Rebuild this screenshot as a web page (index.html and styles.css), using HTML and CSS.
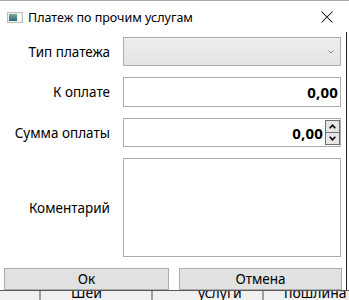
FILE: index.html
```html
<!DOCTYPE html>
<html>
<head>
<meta charset="utf-8">
<link rel="stylesheet" href="styles.css">
</head>
<body>
<div class="window">
  <div class="titlebar">
    <svg class="app-icon" width="16" height="11" viewBox="0 0 16 11">
      <defs>
        <linearGradient id="g1" x1="0" y1="0" x2="0" y2="1">
          <stop offset="0" stop-color="#86ab9f"/>
          <stop offset="1" stop-color="#2f6478"/>
        </linearGradient>
      </defs>
      <rect x="0" y="0" width="16" height="11" fill="#bdbdbd"/>
      <rect x="1" y="1" width="14" height="9" fill="#eeeeee"/>
      <rect x="2" y="2" width="8" height="7" fill="url(#g1)"/>
      <rect x="11" y="2" width="3" height="7" fill="#ffffff"/>
    </svg>
    <span class="title">Платеж по прочим услугам</span>
    <svg class="close" width="12" height="12" viewBox="0 0 12 12">
      <path d="M0.5 0.5 L11.5 11.5 M11.5 0.5 L0.5 11.5" stroke="#111" stroke-width="1.05" fill="none"/>
    </svg>
  </div>
  <div class="content">
    <div class="form">
      <label class="lbl">Тип платежа</label>
      <div class="combo">
        <svg class="chev" width="6" height="4" viewBox="0 0 6 4"><path d="M0.5 0.5 L3 3 L5.5 0.5" stroke="#8a8a8a" fill="none"/></svg>
      </div>
      <label class="lbl">К оплате</label>
      <div class="field"><span class="val">0,00</span></div>
      <label class="lbl">Сумма оплаты</label>
      <div class="field spin-field">
        <span class="val">0,00</span>
        <div class="spin">
          <div class="spin-btn"><svg width="7" height="5" viewBox="0 0 7 5"><path d="M0.7 4.2 L3.5 1.2 L6.3 4.2" stroke="#000" stroke-width="1.6" fill="none"/></svg></div>
          <div class="spin-btn"><svg width="7" height="5" viewBox="0 0 7 5"><path d="M0.7 0.8 L3.5 3.8 L6.3 0.8" stroke="#000" stroke-width="1.6" fill="none"/></svg></div>
        </div>
      </div>
      <label class="lbl">Коментарий</label>
      <div class="memo"></div>
    </div>
    <div class="buttons">
      <div class="btn">Ок</div>
      <div class="btn">Отмена</div>
    </div>
  </div>
</div>
<div class="behind">
  <div class="cell c1"></div>
  <div class="cell c2"><span>Шей</span></div>
  <div class="cell c3"><span>услуги</span></div>
  <div class="cell c4"><span>пошлина</span></div>
</div>
</body>
</html>
```
FILE: styles.css
```css
html, body {
  margin: 0;
  padding: 0;
  background: #ffffff;
  overflow: hidden;
}
body {
  width: 349px;
  height: 300px;
  font-family: "Noto Sans", "Open Sans", sans-serif;
  color: #000;
}
.window {
  width: 349px;
  height: 290px;
  background: #fff;
}
.titlebar {
  border-top: 1px solid #a9a9a9;
  display: flex;
  align-items: center;
  box-sizing: border-box;
  height: 32px;
}
.app-icon {
  margin-left: 7px;
  margin-top: 1px;
}
.title {
  margin-left: 5px;
  font-size: 12.5px;
  flex: 1;
  margin-top: 1px;
}
.close {
  margin-right: 16px;
}
.content {
  width: 346px;
  height: 258px;
  border-right: 1px solid #1e1e1e;
  box-sizing: content-box;
  padding-top: 5px;
}
.form {
  display: grid;
  grid-template-columns: 123px 218px;
  grid-template-rows: 29px 30px 29px 99px;
  row-gap: 11px;
}
.lbl {
  font-size: 13.5px;
  text-align: right;
  padding-right: 13px;
  display: flex;
  align-items: center;
  justify-content: flex-end;
}
.combo {
  border: 1px solid #adadad;
  background: linear-gradient(#efefef, #e3e3e3);
  position: relative;
  box-sizing: border-box;
}
.chev {
  position: absolute;
  right: 6px;
  top: 12px;
}
.field {
  border: 1px solid #adadad;
  box-sizing: border-box;
  display: flex;
  align-items: center;
  justify-content: flex-end;
  padding-right: 2px;
}
.val {
  font-weight: bold;
  font-size: 15px;
  letter-spacing: 0.2px;
}
.spin-field {
  padding-right: 0;
}
.spin {
  display: flex;
  flex-direction: column;
  margin-left: 2px;
  align-self: stretch;
  padding: 1px 0;
}
.spin-btn {
  width: 15px;
  flex: 1;
  box-sizing: border-box;
  border: 1px solid #707070;
  background: #e6e6e6;
  display: flex;
  align-items: center;
  justify-content: center;
}
.spin-btn + .spin-btn {
  border-top: none;
}
.memo {
  border: 1px solid #adadad;
  box-sizing: border-box;
}
.buttons {
  display: flex;
  gap: 10px;
  margin-top: 11px;
  padding-left: 4px;
}
.btn {
  width: 165px;
  height: 22px;
  box-sizing: border-box;
  border: 1px solid #adadad;
  background: #e1e1e1;
  font-size: 13.5px;
  display: flex;
  align-items: center;
  justify-content: center;
}
.btn + .btn {
  width: 163px;
}
.behind {
  display: flex;
  height: 10px;
  border-top: 1px solid #5a5a5a;
  background: #f0f0f0;
  overflow: hidden;
  font-size: 14px;
}
.cell {
  border-right: 1px solid #a0a0a0;
  overflow: hidden;
  position: relative;
  box-sizing: border-box;
}
.cell span {
  position: absolute;
  top: -5px;
  line-height: 14px;
  white-space: nowrap;
}
.c1 { width: 40px; }
.c2 { width: 112px; border-left: 1px solid #a0a0a0; }
.c2 span { left: 30px; }
.c3 { width: 111px; border-left: 1px solid #a0a0a0; }
.c3 span { left: 45px; }
.c4 { flex: 1; border-left: 1px solid #a0a0a0; border-right: none; }
.c4 span { left: 20px; }
```
